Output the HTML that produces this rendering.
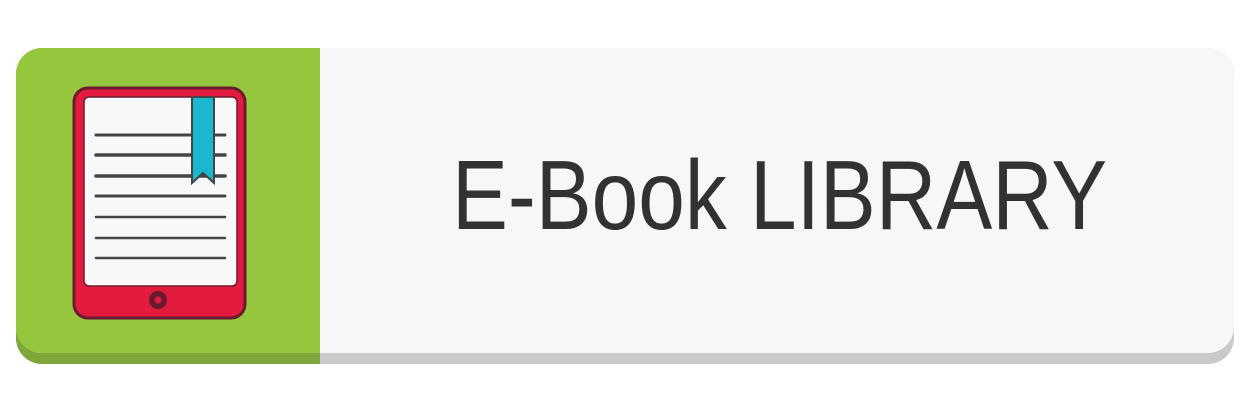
<!DOCTYPE html>
<html><head><style>
html,body{margin:0;padding:0;background:#fff;width:1250px;height:417px;overflow:hidden}
.t{position:absolute;left:452px;top:0;font-family:"Liberation Sans",sans-serif;font-size:98px;color:#323232;transform:scaleX(0.855);transform-origin:0 0;line-height:1;white-space:nowrap}
</style></head><body>
<svg width="1250" height="417" style="position:absolute;left:0;top:0">
<defs><clipPath id="c"><rect x="16" y="48" width="1218" height="316" rx="26"/></clipPath></defs>
<g clip-path="url(#c)">
<rect x="16" y="48" width="1218" height="316" fill="#c9c9c9"/>
<rect x="16" y="48" width="304" height="316" fill="#7fa63a"/>
</g>
<defs><clipPath id="c2"><rect x="16" y="48" width="1218" height="305" rx="26"/></clipPath></defs>
<g clip-path="url(#c2)">
<rect x="16" y="48" width="1218" height="305" fill="#f7f7f7"/>
<rect x="16" y="48" width="304" height="305" fill="#95c63d"/>
</g>
<rect x="74" y="88" width="171" height="230" rx="14" fill="#e31c3f" stroke="#6a1a2e" stroke-width="3"/>
<rect x="84" y="97" width="153" height="189" rx="5" fill="#f8f8f8" stroke="#6a1a2e" stroke-width="1.5"/>
<g stroke="#444" stroke-linecap="round">
<line x1="96" y1="135" x2="225" y2="135" stroke-width="3"/>
<line x1="96" y1="155" x2="225" y2="155" stroke-width="3.5"/>
<line x1="96" y1="176" x2="225" y2="176" stroke-width="3.5"/>
<line x1="96" y1="196" x2="225" y2="196" stroke-width="3"/>
<line x1="96" y1="217" x2="225" y2="217" stroke-width="2.5"/>
<line x1="96" y1="238" x2="225" y2="238" stroke-width="2.5"/>
<line x1="96" y1="258" x2="225" y2="258" stroke-width="2.5"/>
</g>
<path d="M192 97 H214 V183 L203 173 L192 183 Z" fill="#1bb7cf" stroke="#444" stroke-width="2"/>
<circle cx="158" cy="300" r="9" fill="#6a1a2e"/>
<circle cx="158" cy="300" r="3.5" fill="#e31c3f"/>
</svg>
<div class="t" style="top:146px">E-Book LIBRARY</div>
</body></html>
